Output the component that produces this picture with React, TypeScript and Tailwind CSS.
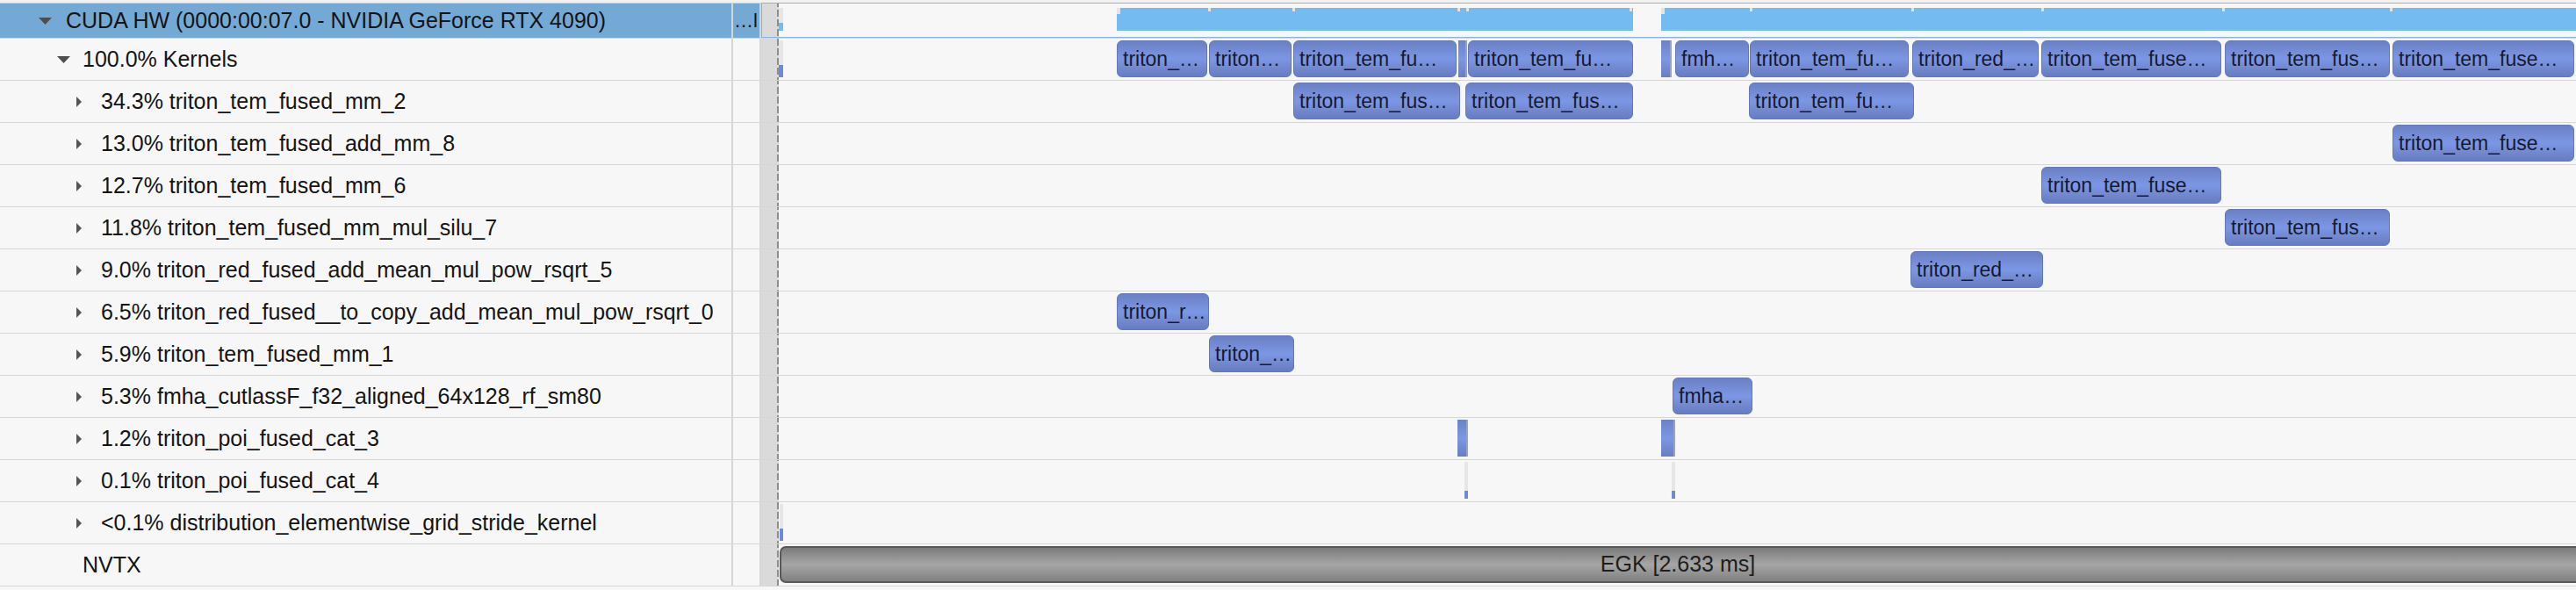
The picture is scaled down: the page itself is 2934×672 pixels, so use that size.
import type { ReactNode } from "react";

type Block = { x: number; w: number; label?: string; thin?: boolean };
type Mini = { x: number; w: number; gray: [number, number]; blue: [number, number]; color: string };

const KERNEL_ROWS: { pct: string; name: string; blocks: Block[]; minis?: Mini[] }[] = [
  {
    pct: "34.3%",
    name: "triton_tem_fused_mm_2",
    blocks: [
      { x: 586, w: 190, label: "triton_tem_fus…" },
      { x: 782, w: 191, label: "triton_tem_fus…" },
      { x: 1105, w: 188, label: "triton_tem_fu…" },
    ],
  },
  {
    pct: "13.0%",
    name: "triton_tem_fused_add_mm_8",
    blocks: [{ x: 1838, w: 207, label: "triton_tem_fuse…" }],
  },
  {
    pct: "12.7%",
    name: "triton_tem_fused_mm_6",
    blocks: [{ x: 1438, w: 205, label: "triton_tem_fuse…" }],
  },
  {
    pct: "11.8%",
    name: "triton_tem_fused_mm_mul_silu_7",
    blocks: [{ x: 1647, w: 188, label: "triton_tem_fus…" }],
  },
  {
    pct: "9.0%",
    name: "triton_red_fused_add_mean_mul_pow_rsqrt_5",
    blocks: [{ x: 1289, w: 151, label: "triton_red_…" }],
  },
  {
    pct: "6.5%",
    name: "triton_red_fused__to_copy_add_mean_mul_pow_rsqrt_0",
    blocks: [{ x: 385, w: 105, label: "triton_r…" }],
  },
  {
    pct: "5.9%",
    name: "triton_tem_fused_mm_1",
    blocks: [{ x: 490, w: 97, label: "triton_…" }],
  },
  {
    pct: "5.3%",
    name: "fmha_cutlassF_f32_aligned_64x128_rf_sm80",
    blocks: [{ x: 1018, w: 91, label: "fmha…" }],
  },
  {
    pct: "1.2%",
    name: "triton_poi_fused_cat_3",
    blocks: [
      { x: 773, w: 12, thin: true },
      { x: 1005, w: 16, thin: true },
    ],
  },
  {
    pct: "0.1%",
    name: "triton_poi_fused_cat_4",
    blocks: [],
    minis: [
      { x: 781, w: 4, gray: [2, 35], blue: [35, 44], color: "#7089d6" },
      { x: 1017, w: 4, gray: [2, 35], blue: [35, 44], color: "#7089d6" },
    ],
  },
  {
    pct: "<0.1%",
    name: "distribution_elementwise_grid_stride_kernel",
    blocks: [],
    minis: [{ x: 1, w: 4, gray: [2, 30], blue: [30, 44], color: "#7089d6" }],
  },
];

const KERNELS: Block[] = [
  { x: 385, w: 103, label: "triton_…" },
  { x: 490, w: 94, label: "triton…" },
  { x: 586, w: 186, label: "triton_tem_fu…" },
  { x: 774, w: 10, thin: true },
  { x: 785, w: 188, label: "triton_tem_fu…" },
  { x: 1005, w: 12, thin: true },
  { x: 1021, w: 84, label: "fmh…" },
  { x: 1106, w: 181, label: "triton_tem_fu…" },
  { x: 1291, w: 144, label: "triton_red_…" },
  { x: 1438, w: 205, label: "triton_tem_fuse…" },
  { x: 1647, w: 188, label: "triton_tem_fus…" },
  { x: 1838, w: 207, label: "triton_tem_fuse…" },
];

const NOTCHES = [385, 489, 585, 773, 783, 969, 1005, 1106, 1290, 1438, 1644, 1835];

function DownTri({ className }: { className?: string }) {
  return (
    <svg width="15" height="8" viewBox="0 0 15 8" className={className}>
      <polygon points="0,0 15,0 7.5,8" fill="#4e4e4e" />
    </svg>
  );
}

function RightTri({ className }: { className?: string }) {
  return (
    <svg width="6" height="12" viewBox="0 0 6 12" className={className}>
      <polygon points="0,0 6,6 0,12" fill="#555555" />
    </svg>
  );
}

function KernelBlock({ b }: { b: Block }) {
  if (b.thin) {
    return (
      <div
        className="absolute top-[2px] h-[42px] border-r-2 border-[#9aa3c4] bg-linear-to-b from-[#6c82c6] via-[#7c97e5] to-[#6a7ec0]"
        style={{ left: b.x, width: b.w }}
      />
    );
  }
  return (
    <div
      className="absolute top-[2px] flex h-[42px] items-center overflow-hidden whitespace-nowrap rounded-[6px] border border-[#6377ba] bg-linear-to-b from-[#6b80c4] via-[#7c97e5] to-[#687cbe] pl-[6px] text-[23px] text-[#161a2e]"
      style={{ left: b.x, width: b.w }}
    >
      {b.label}
    </div>
  );
}

function MiniBar({ m }: { m: Mini }) {
  return (
    <>
      <div
        className="absolute bg-[#e6e6e6]"
        style={{ left: m.x, width: m.w, top: m.gray[0], height: m.gray[1] - m.gray[0] }}
      />
      <div
        className="absolute"
        style={{ left: m.x, width: m.w, top: m.blue[0], height: m.blue[1] - m.blue[0], background: m.color }}
      />
    </>
  );
}

function Dashes() {
  return (
    <div className="absolute right-0 top-0 h-full w-[2px] bg-fixed bg-[repeating-linear-gradient(to_bottom,#8e8e8e_0px,#8e8e8e_8px,transparent_8px,transparent_11px)]" />
  );
}

function Row({ label, children }: { label: ReactNode; children?: ReactNode }) {
  return (
    <div className="flex h-[48px] border-b border-[#d6d6d6]">
      <div className="flex h-full w-[835px] shrink-0 items-center border-r-2 border-[#d6d6d6]">{label}</div>
      <div className="h-full w-[32px] shrink-0 border-r-2 border-[#d6d6d6]" />
      <div className="relative h-full w-[20px] shrink-0 bg-[#dadada]">
        <Dashes />
      </div>
      <div className="relative h-full flex-1 overflow-hidden">{children}</div>
    </div>
  );
}

export default function App() {
  return (
    <div className="h-[672px] w-[2934px] overflow-hidden bg-[#f7f7f7] font-['Liberation_Sans',Arial,sans-serif] text-[25px] text-[#141414]">
      <div className="h-[4px] border-b border-[#d0d0d0] bg-[#f2f2f2]" />
      {/* selected device row */}
      <div className="flex h-[40px] border-b border-[#d6d6d6]">
        <div className="flex h-full w-[835px] shrink-0 items-center border-r-2 border-[#d6d6d6] bg-[#74a9d5]">
          <DownTri className="ml-[44px] mr-[16px]" />
          <span>CUDA HW (0000:00:07.0 - NVIDIA GeForce RTX 4090)</span>
        </div>
        <div className="flex h-full w-[32px] shrink-0 items-center justify-end border-r-2 border-[#d6d6d6] bg-[#74a9d5] pr-[2px] text-[22px] leading-none">
          …l
        </div>
        <div className="-mt-px flex h-[40px] flex-1 border-y border-l border-[#86b4de]">
          <div className="relative h-full w-[19px] shrink-0 bg-[#dadada]">
            <Dashes />
          </div>
          <div className="relative h-full flex-1 overflow-hidden">
            <MiniBar m={{ x: 0, w: 5, gray: [5, 22], blue: [22, 31], color: "#74bbf2" }} />
            <div className="absolute left-[385px] top-[5px] h-[26px] w-[588px] bg-[#74bbf2]" />
            <div className="absolute left-[1005px] top-[5px] h-[26px] w-[1060px] bg-[#74bbf2]" />
            <div className="absolute left-[385px] top-[5px] h-[7px] w-[4px] bg-[#e4e4e4]" />
            <div className="absolute left-[1005px] top-[5px] h-[7px] w-[4px] bg-[#e4e4e4]" />
            {NOTCHES.map((x) => (
              <div key={x} className="absolute top-[5px] h-[4px] w-[3px] bg-[#e4e4e4]" style={{ left: x }} />
            ))}
          </div>
        </div>
      </div>
      <Row
        label={
          <>
            <DownTri className="ml-[65px] mr-[14px]" />
            <span>100.0% Kernels</span>
          </>
        }
      >
        <MiniBar m={{ x: 0, w: 5, gray: [2, 30], blue: [30, 44], color: "#7089d6" }} />
        {KERNELS.map((b) => (
          <KernelBlock key={b.x} b={b} />
        ))}
      </Row>
      {KERNEL_ROWS.map((r) => (
        <Row
          key={r.name}
          label={
            <>
              <RightTri className="ml-[87px] mr-[22px]" />
              <span>
                {r.pct} {r.name}
              </span>
            </>
          }
        >
          {r.blocks.map((b) => (
            <KernelBlock key={b.x} b={b} />
          ))}
          {r.minis?.map((m) => <MiniBar key={m.x} m={m} />)}
        </Row>
      ))}
      <Row label={<span className="ml-[94px]">NVTX</span>}>
        <div className="absolute -right-[10px] left-[1px] top-[2px] flex h-[42px] items-center justify-center rounded-[7px] border-2 border-[#585858] bg-linear-to-b from-[#7c7c7c] via-[#a6a6a6] to-[#808080] pr-[10px] text-[25px] text-[#1e1e1e]">
          EGK [2.633 ms]
        </div>
      </Row>
    </div>
  );
}
